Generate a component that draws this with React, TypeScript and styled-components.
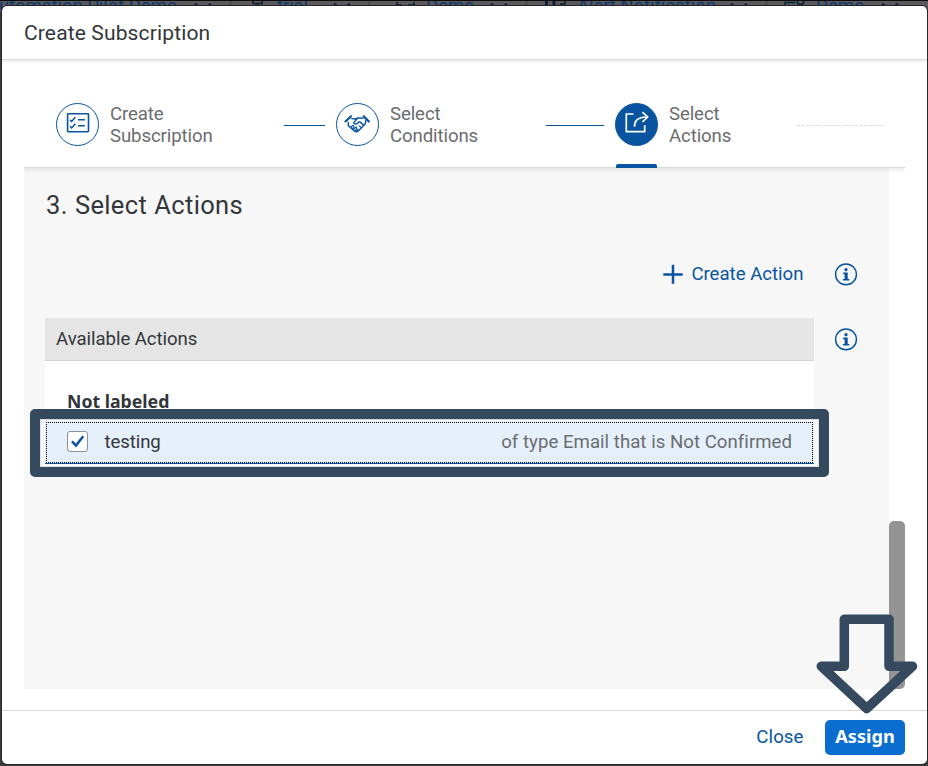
import React from 'react';
import styled, { createGlobalStyle } from 'styled-components';

const BLUE = '#0854a0';
const INK = '#32363a';
const MUTED = '#6a6d70';
const MARK = '#354a5f';

const GlobalStyle = createGlobalStyle`
  *, *::before, *::after { box-sizing: border-box; }
  body { margin: 0; overflow: hidden; background: #3b3b3b; font-family: Roboto, "Liberation Sans", sans-serif; }
`;

const Page = styled.div`
  position: relative;
  width: 928px;
  height: 766px;
  overflow: hidden;
  background: #3d3d3d;
  padding: 6px 1px 2px 2px;
`;

const Breadcrumbs = styled.div`
  position: absolute;
  inset: 0 0 auto 0;
  height: 12px;
  background: #5b595b;
  border-top: 1px solid #0c0c0c;
  overflow: hidden;
`;

const Crumb = styled.span<{ $x: number }>`
  position: absolute;
  left: ${p => p.$x}px;
  top: -6px;
  font-size: 18.6px;
  line-height: 22px;
  letter-spacing: -0.1px;
  white-space: nowrap;
  color: #0c3a70;
`;

const CrumbArt = styled.svg`
  position: absolute;
  left: 0;
  top: -1px;
`;

const Dialog = styled.section`
  position: relative;
  display: flex;
  flex-direction: column;
  width: 925px;
  height: 758px;
  background: #fff;
  border-radius: 5px;
  overflow: hidden;
  box-shadow: 0 0 0 1px #262626;
`;

const Header = styled.header`
  position: relative;
  z-index: 2;
  display: flex;
  align-items: center;
  flex: none;
  height: 54px;
  padding: 0 22px;
  border-bottom: 1px solid #d9d9d9;
  box-shadow: 0 1px 4px rgba(0, 0, 0, 0.13);
`;

const Title = styled.h1`
  margin: 0;
  font-size: 21px;
  font-weight: 400;
  line-height: 26px;
  letter-spacing: 0.14px;
  color: ${INK};
`;

const Body = styled.div`
  flex: none;
  display: flex;
  flex-direction: column;
  height: 650px;
  padding: 0 22px;
`;

const Steps = styled.nav`
  position: relative;
  z-index: 1;
  flex: none;
  display: flex;
  align-items: flex-start;
  height: 108px;
  padding: 43px 0 0 32px;
  background: #fff;
  border-bottom: 1px solid #d9d9d9;
  box-shadow: 0 2px 4px rgba(0, 0, 0, 0.09);
  clip-path: inset(0 0 -8px 0);
`;

const Step = styled.div<{ $width: number }>`
  flex: none;
  display: flex;
  gap: 11px;
  width: ${p => p.$width}px;
`;

const StepCircle = styled.span<{ $active?: boolean }>`
  position: relative;
  flex: none;
  width: 43px;
  height: 43px;
  border: 1px solid ${BLUE};
  border-radius: 50%;
  background: ${p => (p.$active ? BLUE : '#fff')};
  color: ${p => (p.$active ? '#fff' : BLUE)};

  svg { display: block; width: 41px; height: 41px; }

  &::after {
    content: '';
    display: ${p => (p.$active ? 'block' : 'none')};
    position: absolute;
    left: 0;
    top: 60px;
    width: 41px;
    height: 4px;
    border-radius: 2px 2px 0 0;
    background: ${BLUE};
  }
`;

const StepLabel = styled.span`
  font-size: 18.6px;
  line-height: 22px;
  letter-spacing: -0.1px;
  color: ${MUTED};
`;

const Connector = styled.span<{ $width: number; $dashed?: boolean }>`
  flex: none;
  width: ${p => p.$width}px;
  margin: 22px 11px 0 0;
  height: 1px;
  background: ${p => (p.$dashed ? 'repeating-linear-gradient(90deg, #dcdcdc 0 3px, transparent 3px 4.5px)' : BLUE)};
`;

const ScrollArea = styled.div`
  display: flex;
  width: 881px;
  height: 521px;
`;

const Content = styled.main`
  width: 865px;
  padding: 21px 21px 0;
  background: #f7f7f7;
`;

const ScrollTrack = styled.div`
  width: 16px;
  padding-top: 353px;
`;

const ScrollThumb = styled.div`
  height: 168px;
  border-radius: 5px;
  background: #949494;
`;

const SectionTitle = styled.h2`
  margin: 0;
  padding-left: 1px;
  font-size: 25.5px;
  font-weight: 400;
  line-height: 32px;
  letter-spacing: 0.35px;
  word-spacing: 0.5px;
  color: ${INK};
`;

const ActionBar = styled.div`
  display: flex;
  justify-content: flex-end;
  align-items: center;
  height: 24px;
  margin-top: 41px;
  padding-right: 10px;
`;

const LinkButton = styled.button`
  display: flex;
  align-items: center;
  gap: 8px;
  padding: 0;
  border: 0;
  background: none;
  font: 400 18.6px/22px Roboto, sans-serif;
  color: ${BLUE};
`;

const InfoSvg = styled.svg`
  flex: none;
  display: block;
  width: 24px;
  height: 24px;
`;

const ActionInfo = styled.div`
  margin-left: 30.5px;
`;

const ListRow = styled.div`
  display: flex;
  margin-top: 32px;
`;

const InfoSlot = styled.div`
  margin: 9px 0 0 20px;
`;

const List = styled.div`
  width: 769px;
  flex: none;
`;

const ListHeader = styled.div`
  height: 43px;
  padding: 9.5px 11px;
  border-bottom: 1px solid #d3d3d3;
  background: #e5e5e5;
  font-size: 18.6px;
  line-height: 22px;
  letter-spacing: -0.05px;
  color: ${INK};
`;

const GroupHeader = styled.div`
  height: 60px;
  padding: 29px 22px 0;
  background: #fff;
  border-bottom: 1px solid #d3d3d3;
  font: 700 17.7px/22px "Noto Sans", sans-serif;
  color: ${INK};
`;

const Item = styled.div`
  position: relative;
  display: flex;
  align-items: center;
  height: 43px;
  padding: 0 22px 1px;
  background: #e5f0fa;
  border-bottom: 1px solid ${BLUE};

  &::before {
    content: '';
    position: absolute;
    inset: 1px 1px 0 1px;
    border: 1px dotted #000;
  }
`;

const CheckBox = styled.span`
  width: 21px;
  height: 21px;
  border: 1px solid #89919a;
  border-radius: 3px;
  background: #fff;

  svg { display: block; }
`;

const ItemName = styled.span`
  margin-left: 16.5px;
  font-size: 18.6px;
  line-height: 22px;
  letter-spacing: -0.1px;
  color: ${INK};
`;

const ItemNote = styled.span`
  margin-left: auto;
  font-size: 18.6px;
  line-height: 22px;
  letter-spacing: 0.04px;
  color: ${MUTED};
`;

const Highlight = styled.div`
  position: absolute;
  left: 30px;
  top: 409px;
  width: 799px;
  height: 68px;
  border: 10px solid ${MARK};
  border-radius: 5px;
  box-shadow: inset 0 0 0 1px #dadcde, inset 0 0 0 2px #fff;
`;

const ArrowMark = styled.svg`
  position: absolute;
  left: 808px;
  top: 606px;
`;

const Footer = styled.footer`
  flex: 1;
  display: flex;
  justify-content: flex-end;
  align-items: flex-start;
  gap: 21.5px;
  padding: 9px 22px 0;
  border-top: 1px solid #d9d9d9;
`;

const Button = styled.button<{ $primary?: boolean }>`
  height: 35px;
  width: ${p => (p.$primary ? '80px' : 'auto')};
  padding: ${p => (p.$primary ? '0 0 3px' : '0 0 1px')};
  border: 0;
  border-radius: 5px;
  background: ${p => (p.$primary ? '#0a6ed1' : 'transparent')};
  color: ${p => (p.$primary ? '#fff' : BLUE)};
  font: ${p => (p.$primary ? '700 18.2px/22px "Noto Sans"' : '400 18.6px/22px Roboto')}, sans-serif;
  letter-spacing: ${p => (p.$primary ? '0' : '0.1px')};
`;

const InfoIcon = () => (
  <InfoSvg viewBox="0 0 24 24" fill="none">
    <circle cx="12" cy="12.4" r="10.4" stroke={BLUE} strokeWidth="1.4" />
    <circle cx="12" cy="7.7" r="1.6" fill={BLUE} />
    <path d="M9.200 10.600h4.500v6.300h1.600v1.600H8.900v-1.600h1.700v-4.700H9.200z" fill={BLUE} />
  </InfoSvg>
);

const ChecklistIcon = () => (
  <svg viewBox="0 0 41 41" fill="none" stroke="currentColor">
    <rect x="10.600" y="9.800" width="20.900" height="17.900" rx="0.600" strokeWidth="1.600" />
    <path d="M13 15.900l1.700 1.600 3.600-4.200M13 22.300l1.700 1.600 3.600-4.200" strokeWidth="1.500" />
    <path d="M21 15.700h6.800M21 21.800h6.800" strokeWidth="1.400" />
  </svg>
);

const HandshakeIcon = () => (
  <svg viewBox="0 0 41 41" fill="none" stroke="currentColor" strokeWidth="1.4" strokeLinejoin="round" strokeLinecap="round">
    <path d="M7.900 17.500l6.200-5.900M8.900 17.900l5.600-5.300M26.800 11.600l5.700 5.800M26.100 12.500l5.700 5.700" strokeWidth="1.200" />
    <path d="M11.300 18.500v3.100l6.500 5.700c1.200 1 2.800.6 3.700-.5l6.600-6.800.7-3.500" />
    <path d="M14.700 14.600l3.500.4 2.700-1h2.900l2 .4M20.800 14l-4.200 4.600c.4 1.600 2.500 1.700 3.700.8l2-1.600 1.600.7 2.400 2.800" />
    <path d="M13.700 23.500l1.600-1.800c.9-.7 2 .1 1.500 1.100l-1 1.800M16.300 25.800l2-2.400c1-.6 1.900.3 1.300 1.200l-1.300 2.400M19.400 27.500l1.500-2.200M22.400 21.800l2 2" strokeWidth="1.200" />
  </svg>
);

const ShareIcon = () => (
  <svg viewBox="0 0 41 41" fill="none" stroke="currentColor" strokeWidth="1.7">
    <path d="M17.500 10H10.300v17.600h18.400V21.200" />
    <path d="M18.500 22.800c-.2-5.600 3.300-10 12.200-9.800M26.400 8.200l5.200 4.800-5.200 5" />
  </svg>
);

const steps = [
  { label: ['Create', 'Subscription'], icon: <ChecklistIcon />, width: 228, line: 41 },
  { label: ['Select', 'Conditions'], icon: <HandshakeIcon />, width: 210, line: 58 },
  { label: ['Select', 'Actions'], icon: <ShareIcon />, width: 182, line: 87, active: true },
];

export default function App() {
  return (
    <Page>
      <GlobalStyle />
      <Breadcrumbs>
        <Crumb $x={-13}>Automation Pilot Demo</Crumb>
        <Crumb $x={277}>trial</Crumb>
        <Crumb $x={426}>Demo</Crumb>
        <Crumb $x={577}>Alert Notification</Crumb>
        <Crumb $x={816}>Demo</Crumb>
        <CrumbArt width="928" height="12" fill="none" stroke="#0a2038" strokeWidth="1.6">
          <path d="M195 3.500l8 6 8-6M334 3.500l8 6 8-6M491 3.500l8 6 8-6M731 3.500l8 6 8-6M882 3.500l8 6 8-6" />
          <path d="M253 0v3.500h9V0M257.500 3.500v4M397 2v8M397 5h5M414 2v8M408 5h6M785 8V2.500h10M788 5l4 3M797 0c0 6 7 6 7 0" />
          <path d="M546.500 1v8M554 1v8" strokeWidth="3" />
          <path d="M561 8V4h4V0" />
          <path d="M231 1l-3 9M370 1l-3 9M527 1l-3 9M767 1l-3 9" stroke="#4a494b" />
        </CrumbArt>
      </Breadcrumbs>
      <Dialog>
        <Header><Title>Create Subscription</Title></Header>
        <Body>
          <Steps>
            {steps.map(s => (
              <React.Fragment key={s.label[1]}>
                <Step $width={s.width}>
                  <StepCircle $active={s.active}>{s.icon}</StepCircle>
                  <StepLabel>{s.label[0]}<br />{s.label[1]}</StepLabel>
                </Step>
                <Connector $width={s.line} $dashed={s.active} />
              </React.Fragment>
            ))}
          </Steps>
          <ScrollArea>
            <Content>
              <SectionTitle>3. Select Actions</SectionTitle>
              <ActionBar>
                <LinkButton>
                  <svg width="20" height="20" viewBox="0 0 20 20" stroke={BLUE} strokeWidth="2.5">
                    <path d="M0.300 10.500h19.400M10 0.800v19" />
                  </svg>
                  Create Action
                </LinkButton>
                <ActionInfo><InfoIcon /></ActionInfo>
              </ActionBar>
              <ListRow>
                <List>
                  <ListHeader>Available Actions</ListHeader>
                  <GroupHeader>Not labeled</GroupHeader>
                  <Item>
                    <CheckBox>
                      <svg width="19" height="19" viewBox="0 0 19 19" fill="none" stroke={BLUE} strokeWidth="2.500">
                        <path d="M4 9.300l4 4.300 7.200-9.400" />
                      </svg>
                    </CheckBox>
                    <ItemName>testing</ItemName>
                    <ItemNote>of type Email that is Not Confirmed</ItemNote>
                  </Item>
                </List>
                <InfoSlot><InfoIcon /></InfoSlot>
              </ListRow>
            </Content>
            <ScrollTrack><ScrollThumb /></ScrollTrack>
          </ScrollArea>
        </Body>
        <Footer>
          <Button>Close</Button>
          <Button $primary>Assign</Button>
        </Footer>
      </Dialog>
      <Highlight />
      <ArrowMark width="118" height="116" viewBox="808 606 118 116" fill="none" stroke={MARK} strokeWidth="9.500" strokeLinejoin="round">
        <path d="M844.300 619.300H889V666.300H912.500L866.700 708.500L821.300 666.300H844.300Z" />
      </ArrowMark>
    </Page>
  );
}
